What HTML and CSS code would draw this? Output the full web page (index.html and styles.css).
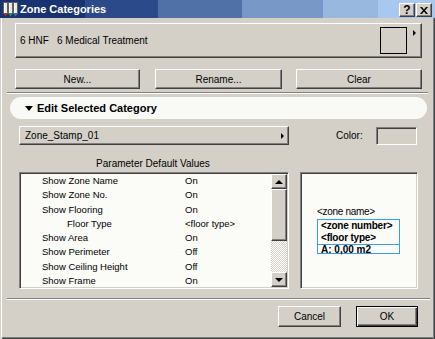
FILE: index.html
```html
<!DOCTYPE html>
<html>
<head>
<meta charset="utf-8">
<link rel="stylesheet" href="styles.css">
</head>
<body>
<div class="dialog">
  <div class="titlebar">
    <svg class="appicon" width="15" height="15" viewBox="0 0 15 15">
      <rect x="0.5" y="0.5" width="4" height="11" fill="#e8e8e8" stroke="#606060"/>
      <rect x="5.5" y="0.5" width="4" height="11" fill="#e8e8e8" stroke="#606060"/>
      <rect x="10.5" y="0.5" width="4" height="11" fill="#e8e8e8" stroke="#606060"/>
      <rect x="1" y="1" width="1" height="10" fill="#fff"/>
      <rect x="6" y="1" width="1" height="10" fill="#fff"/>
      <rect x="11" y="1" width="1" height="10" fill="#fff"/>
      <path d="M0.5 11.5 L2.5 14.5 L4.5 11.5 Z" fill="#d02020"/>
      <path d="M5.5 11.5 L7.5 14.5 L9.5 11.5 Z" fill="#20a040"/>
      <path d="M10.5 11.5 L12.5 14.5 L14.5 11.5 Z" fill="#3070d0"/>
    </svg>
    <span class="title">Zone Categories</span>
    <div class="tbtns">
      <div class="tbtn">?</div>
      <div class="tbtn">
        <svg width="8" height="7" viewBox="0 0 8 7"><path d="M0 0 L2 0 L4 2.5 L6 0 L8 0 L5 3.5 L8 7 L6 7 L4 4.5 L2 7 L0 7 L3 3.5 Z" fill="#000"/></svg>
      </div>
    </div>
  </div>

  <div class="catpanel raised">
    <span class="code">6 HNF</span>
    <span>6 Medical Treatment</span>
    <div class="swatch"></div>
    <span class="tri-right small"></span>
  </div>

  <div class="btnrow">
    <div class="btn raised w-new">New...</div>
    <div class="btn raised w-rename">Rename...</div>
    <div class="btn raised w-clear">Clear</div>
  </div>

  <div class="sep"></div>

  <div class="pill"><span class="tri-down"></span>Edit Selected Category</div>

  <div class="stamprow">
    <div class="dropdown raised"><span>Zone_Stamp_01</span><span class="tri-right"></span></div>
    <span class="colorlbl">Color:</span>
    <div class="colorbox sunken"></div>
  </div>

  <div class="paramlbl">Parameter Default Values</div>

  <div class="lower">
    <div class="list sunken">
      <div class="rows">
        <div class="row"><span class="k">Show Zone Name</span><span>On</span></div>
        <div class="row"><span class="k">Show Zone No.</span><span>On</span></div>
        <div class="row"><span class="k">Show Flooring</span><span>On</span></div>
        <div class="row"><span class="k sub">Floor Type</span><span>&lt;floor type&gt;</span></div>
        <div class="row"><span class="k">Show Area</span><span>On</span></div>
        <div class="row"><span class="k">Show Perimeter</span><span>Off</span></div>
        <div class="row"><span class="k">Show Ceiling Height</span><span>Off</span></div>
        <div class="row"><span class="k">Show Frame</span><span>On</span></div>
      </div>
      <div class="scroll">
        <div class="sbtn raised"><span class="arr-up"></span></div>
        <div class="thumb raised"></div>
        <div class="track"></div>
        <div class="sbtn raised"><span class="arr-down"></span></div>
      </div>
    </div>
    <div class="preview sunken">
      <div class="zname">&lt;zone name&gt;</div>
      <div class="zbox">
        <div class="zrow">&lt;zone number&gt;</div>
        <div class="zrow">&lt;floor type&gt;</div>
        <div class="zarea">A: 0,00 m2</div>
      </div>
    </div>
  </div>

  <div class="sep bottom"></div>

  <div class="footer">
    <div class="btn raised w-cancel">Cancel</div>
    <div class="btn default w-ok">OK</div>
  </div>
</div>
</body>
</html>
```
FILE: styles.css
```css
* { box-sizing: border-box; margin: 0; padding: 0; }
body {
  margin: 0;
  background: #d4d0c8;
  font-family: "Liberation Sans", Arial, sans-serif;
  font-size: 9.5px;
  color: #000;
}
.dialog {
  width: 435px;
  height: 339px;
  background: #d4d0c8;
  overflow: hidden;
  box-shadow: inset 1px 0 0 #d4d0c8, inset 2px 0 0 #fff,
              inset -1px 0 0 #404040, inset -2px 0 0 #808080,
              inset 0 -1px 0 #404040, inset 0 -2px 0 #808080;
}
.titlebar {
  height: 18px;
  display: flex;
  align-items: center;
  color: #fff;
  background: linear-gradient(to right,
    #18336f 0 85px, #2b4a8a 85px 158px, #5070a8 158px 242px,
    #7898c8 242px 323px, #98b8e0 323px 378px, #a8c8f0 378px);
}
.appicon { margin-left: 3px; flex: none; }
.title { margin-left: 2px; font-weight: bold; font-size: 11px; }
.tbtns { margin-left: auto; margin-right: 3px; display: flex; gap: 1px; margin-top: 2px; }
.tbtn {
  width: 16px; height: 14px;
  background: #d4d0c8;
  border: 1px solid; border-color: #fff #404040 #404040 #fff;
  box-shadow: inset -1px -1px 0 #808080;
  color: #000; font-weight: bold; font-size: 12px;
  display: flex; align-items: center; justify-content: center;
  line-height: 1;
}
.raised {
  background: #d4d0c8;
  border: 1px solid; border-color: #fff #404040 #404040 #fff;
  box-shadow: inset -1px -1px 0 #808080;
}
.sunken {
  border: 1px solid; border-color: #808080 #fff #fff #808080;
  box-shadow: inset 1px 1px 0 #404040, inset -1px -1px 0 #d4d0c8;
}
.catpanel {
  margin: 5px 13px 0 15px;
  height: 35px;
  display: flex;
  align-items: center;
  padding-left: 4px;
  font-size: 10px;
}
.catpanel .code { width: 37px; }
.swatch {
  margin-left: auto;
  width: 27px; height: 27px;
  border: 1px solid #000;
  margin-right: 6px;
}
.tri-right {
  width: 0; height: 0;
  border-left: 3px solid #000;
  border-top: 3px solid transparent;
  border-bottom: 3px solid transparent;
}
.tri-right.small { align-self: flex-start; margin-top: 6px; margin-right: 5px; }
.btnrow { display: flex; margin: 11px 0 0 15px; }
.btn {
  height: 20px;
  display: flex; align-items: center; justify-content: center;
  font-size: 10px;
}
.w-new { width: 125px; }
.w-rename { width: 127px; margin-left: 15px; }
.w-clear { width: 126px; margin-left: 14px; }
.sep {
  margin: 3px 0 0 7px;
  width: 421px; height: 2px;
  border-top: 1px solid #808080;
  border-bottom: 1px solid #fff;
}
.pill {
  margin: 3px 0 0 10px;
  width: 417px; height: 22px;
  border-radius: 11px;
  background: #f9f9f6;
  display: flex; align-items: center;
  padding-left: 15px;
  font-weight: bold; font-size: 11px;
}
.tri-down {
  width: 0; height: 0;
  border-top: 5px solid #000;
  border-left: 4px solid transparent;
  border-right: 4px solid transparent;
  margin-right: 4px;
}
.stamprow { margin-top: 7px; display: flex; align-items: center; padding-left: 19px; height: 19px; }
.dropdown {
  width: 270px; height: 19px;
  display: flex; align-items: center;
  padding-left: 5px; font-size: 10px;
}
.dropdown .tri-right { margin-left: auto; margin-right: 4px; }
.colorlbl { margin-left: 47px; width: 40px; font-size: 10px; }
.colorbox { width: 41px; height: 18px; }
.paramlbl {
  margin: 13px 0 0 19px; width: 268px;
  height: 12px; line-height: 12px; text-align: center;
  font-size: 10px;
}
.lower { margin-top: 2px; display: flex; padding-left: 19px; }
.list { width: 270px; height: 117px; display: flex; padding: 1px; }
.rows { flex: 1; background: #fbfbf8; overflow: hidden; }
.row { display: flex; height: 14.3px; line-height: 14.3px; padding-left: 21px; white-space: nowrap; }
.row .k { width: 143px; }
.row .k.sub { padding-left: 25px; }
.scroll { width: 16px; display: flex; flex-direction: column; }
.sbtn { height: 15px; display: flex; align-items: center; justify-content: center; }
.thumb { height: 52px; }
.track {
  flex: 1;
  background-color: #fff;
  background-image: repeating-conic-gradient(#d4d0c8 0 25%, #fff 0 50%);
  background-size: 2px 2px;
}
.arr-up { width: 0; height: 0; border-bottom: 4px solid #000; border-left: 4px solid transparent; border-right: 4px solid transparent; }
.arr-down { width: 0; height: 0; border-top: 4px solid #000; border-left: 4px solid transparent; border-right: 4px solid transparent; }
.preview {
  margin-left: 11px;
  width: 118px; height: 117px;
  background: #fbfbf8;
  padding: 34px 0 0 16px;
}
.zname { font-size: 10px; line-height: 10px; height: 12px; letter-spacing: -0.3px; }
.zbox { width: 83px; border: 1px solid #3c9be8; font-weight: bold; font-size: 10px; }
.zrow { height: 12px; line-height: 12px; padding-left: 3px; letter-spacing: -0.2px; }
.zarea { border-top: 1px solid #3c9be8; height: 9px; line-height: 9px; padding-left: 3px; }
.sep.bottom { margin-top: 9px; width: 423px; }
.footer { display: flex; margin-top: 6px; padding-left: 278px; }
.w-cancel { width: 63px; height: 21px; }
.w-ok { width: 62px; height: 21px; margin-left: 15px; }
.default {
  background: #d4d0c8;
  border: 1px solid #000;
  box-shadow: inset 1px 1px 0 #fff, inset -1px -1px 0 #404040, inset -2px -2px 0 #808080;
}
```
